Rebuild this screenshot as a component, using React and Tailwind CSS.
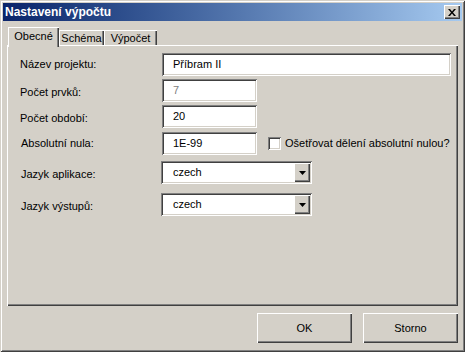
import React from "react";

const sunken =
  "shadow-[inset_1px_1px_0_#808080,inset_-1px_-1px_0_#ffffff,inset_2px_2px_0_#404040,inset_-2px_-2px_0_#d4d0c8]";
const raised =
  "shadow-[inset_1px_1px_0_#ffffff,inset_-1px_-1px_0_#404040,inset_-2px_-2px_0_#808080]";

function Row({ label, children, labelClass = "", className = "" }) {
  return (
    <div className={"flex items-center " + className}>
      <div className={"w-[155px] pl-[13px] " + labelClass}>{label}</div>
      {children}
    </div>
  );
}

function TextBox({ value, w, disabled }) {
  return (
    <div
      className={`${w} h-[23px] bg-white ${sunken} flex items-center pl-[11px] ${
        disabled ? "text-[#808080]" : "text-black"
      }`}
    >
      {value}
    </div>
  );
}

function Select({ value }) {
  return (
    <div className={`w-[151px] h-[23px] bg-white ${sunken} flex items-center pl-[12px] pr-[2px] -ml-[1px]`}>
      <span className="flex-1">{value}</span>
      <div className={`w-[16px] h-[19px] bg-[#d4d0c8] ${raised} flex items-center justify-center`}>
        <svg width="7" height="4" viewBox="0 0 7 4">
          <path d="M0 0h7L3.5 4z" fill="#000" />
        </svg>
      </div>
    </div>
  );
}

export default function App() {
  return (
    <div
      className="w-[465px] h-[352px] bg-[#d4d0c8] flex flex-col p-[3px] shadow-[inset_1px_1px_0_#d4d0c8,inset_-1px_-1px_0_#404040,inset_2px_2px_0_#ffffff,inset_-2px_-2px_0_#808080] text-[11px] text-black"
      style={{ fontFamily: '"Liberation Sans", Arial, sans-serif' }}
    >
      {/* Title bar */}
      <div className="h-[18px] flex items-center justify-between pl-[2px] pr-[2px] bg-gradient-to-r from-[#0a246a] to-[#a6caf0]">
        <span className="text-white font-bold text-[12px] leading-none">Nastavení výpočtu</span>
        <div className={`w-[16px] h-[14px] bg-[#d4d0c8] ${raised} flex items-center justify-center`}>
          <svg width="8" height="7" viewBox="0 0 8 7">
            <path d="M0 0h2l2 2.5L6 0h2L5 3.5 8 7H6L4 4.5 2 7H0l3-3.5z" fill="#000" />
          </svg>
        </div>
      </div>

      {/* Tabs */}
      <div className="flex items-end ml-[5px] mt-[6px] h-[18px]">
        <div
          className={`relative z-10 w-[51px] h-[20px] -mb-[2px] bg-[#d4d0c8] shadow-[inset_1px_1px_0_#ffffff,inset_-1px_0_0_#404040,inset_-2px_0_0_#808080] flex items-center justify-center pb-[2px]`}
        >
          Obecné
        </div>
        <div className="w-[45px] h-[15px] shadow-[inset_1px_1px_0_#ffffff,inset_-1px_0_0_#404040,inset_-2px_0_0_#808080] flex items-center justify-center pt-[1px]">
          Schéma
        </div>
        <div className="w-[53px] h-[15px] shadow-[inset_1px_1px_0_#ffffff,inset_-1px_0_0_#404040,inset_-2px_0_0_#808080] flex items-center justify-center pt-[1px]">
          Výpočet
        </div>
      </div>

      {/* Panel */}
      <div className={`mx-[4px] h-[261px] ${raised} flex flex-col pt-[8px]`}>
        <Row label="Název projektu:">
          <TextBox value="Příbram II" w="w-[289px]" />
        </Row>
        <Row label="Počet prvků:" className="mt-[3px]" labelClass="pt-[3px]">
          <TextBox value="7" w="w-[95px]" disabled />
        </Row>
        <Row label="Počet období:" className="mt-[3px]" labelClass="pt-[3px]">
          <TextBox value="20" w="w-[95px]" />
        </Row>
        <Row label="Absolutní nula:" className="mt-[4px]" labelClass="pl-[14px]">
          <TextBox value="1E-99" w="w-[95px]" />
          <div className={`ml-[11px] w-[13px] h-[13px] bg-white ${sunken}`} />
          <span className="ml-[4px]">Ošetřovat dělení absolutní nulou?</span>
        </Row>
        <Row label="Jazyk aplikace:" className="mt-[6px]" labelClass="pl-[14px] pt-[4px]">
          <Select value="czech" />
        </Row>
        <Row label="Jazyk výstupů:" className="mt-[9px]" labelClass="pl-[14px] pt-[4px]">
          <Select value="czech" />
        </Row>
      </div>

      {/* Buttons */}
      <div className="flex justify-end gap-[11px] mt-[7px] pr-[4px]">
        <div className={`w-[95px] h-[30px] ${raised} flex items-center justify-center`}>OK</div>
        <div className={`w-[95px] h-[30px] ${raised} flex items-center justify-center`}>Storno</div>
      </div>
    </div>
  );
}
